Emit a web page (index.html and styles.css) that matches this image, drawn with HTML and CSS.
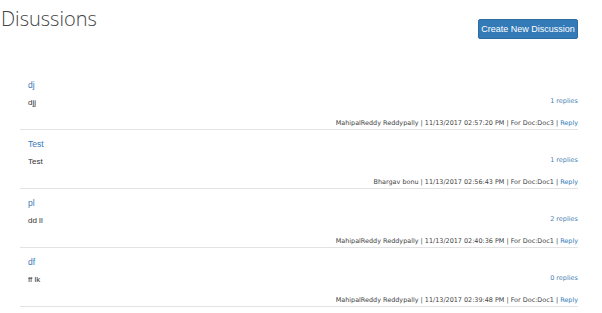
FILE: index.html
```html
<!DOCTYPE html>
<html lang="en">

<head>
    <meta charset="UTF-8">
    <meta name="viewport" content="width=device-width, initial-scale=1.0">
    <title>Disussions</title>
    <link rel="stylesheet" href="styles.css">
</head>

<body>
    <div class="header">
        <h1 class="page-title">Disussions</h1>
        <button class="btn-create">Create New Discussion</button>
    </div>
    <ul class="discussions">
        <li class="item">
            <a class="item-title" href="#">dj</a>
            <div class="item-row">
                <span class="item-body">djj</span>
                <a class="item-replies" href="#">1 replies</a>
            </div>
            <div class="item-meta">MahipalReddy Reddypally | 11/13/2017 02:57:20 PM | For Doc:Doc3 | <a href="#">Reply</a></div>
        </li>
        <li class="item">
            <a class="item-title" href="#">Test</a>
            <div class="item-row">
                <span class="item-body">Test</span>
                <a class="item-replies" href="#">1 replies</a>
            </div>
            <div class="item-meta">Bhargav bonu | 11/13/2017 02:56:43 PM | For Doc:Doc1 | <a href="#">Reply</a></div>
        </li>
        <li class="item">
            <a class="item-title" href="#">pl</a>
            <div class="item-row">
                <span class="item-body">dd ll</span>
                <a class="item-replies" href="#">2 replies</a>
            </div>
            <div class="item-meta">MahipalReddy Reddypally | 11/13/2017 02:40:36 PM | For Doc:Doc1 | <a href="#">Reply</a></div>
        </li>
        <li class="item">
            <a class="item-title" href="#">df</a>
            <div class="item-row">
                <span class="item-body">ff lk</span>
                <a class="item-replies" href="#">0 replies</a>
            </div>
            <div class="item-meta">MahipalReddy Reddypally | 11/13/2017 02:39:48 PM | For Doc:Doc1 | <a href="#">Reply</a></div>
        </li>
    </ul>
</body>

</html>
```

FILE: styles.css
```css
* {
    margin: 0;
    padding: 0;
    box-sizing: border-box;
}

body {
    font-family: "Liberation Sans", Arial, sans-serif;
    color: #333;
    background: #fff;
    width: 602px;
}

ul {
    list-style: none;
}

a {
    color: #337ab7;
    text-decoration: none;
}

.header {
    display: flex;
    justify-content: space-between;
    align-items: flex-start;
    height: 71px;
    padding-right: 24px;
}

.page-title {
    font-family: "Open Sans", sans-serif;
    font-weight: 300;
    font-size: 20px;
    line-height: 28px;
    color: #444;
    padding-left: 1px;
    padding-top: 5px;
}

.btn-create {
    margin-top: 19px;
    width: 100px;
    height: 20px;
    background: #337ab7;
    border: 1px solid #2e6da4;
    border-radius: 2px;
    color: #fff;
    font-family: "Liberation Sans", Arial, sans-serif;
    font-size: 9px;
}

.discussions {
    margin-left: 20px;
    width: 558px;
}

.item {
    height: 59px;
    padding-top: 8px;
    border-bottom: 1px solid #e3e3e3;
}

.item-title {
    display: block;
    padding-left: 8px;
    font-size: 8.5px;
    line-height: 12px;
}

.item-row {
    display: flex;
    justify-content: space-between;
    margin-top: 6px;
    height: 12px;
}

.item-body {
    padding-left: 8px;
    font-size: 8px;
    line-height: 12px;
}

.item-replies {
    margin-top: -2px;
    font-family: "DejaVu Sans", sans-serif;
    font-size: 6.5px;
    line-height: 12px;
    color: #4a7fb3;
}

.item-meta {
    margin-top: 8px;
    text-align: right;
    font-family: "DejaVu Sans", sans-serif;
    font-size: 6.45px;
    line-height: 12px;
    color: #444;
}
```
